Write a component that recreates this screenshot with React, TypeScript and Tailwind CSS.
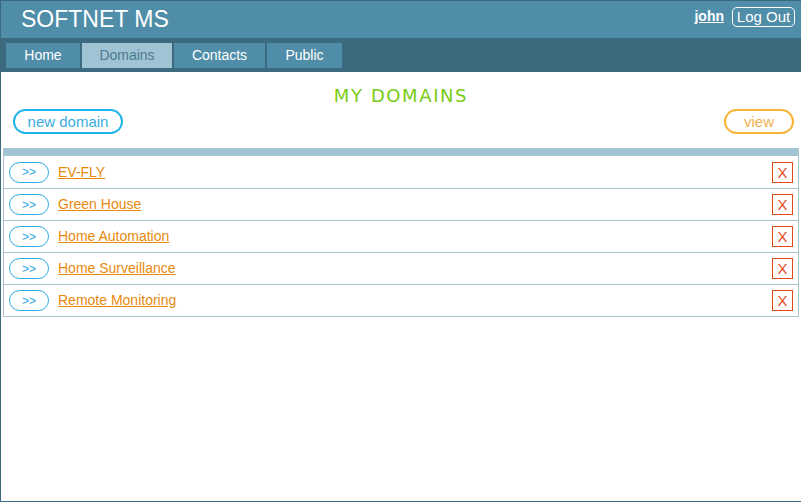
import React from 'react';

const domains = ['EV-FLY', 'Green House', 'Home Automation', 'Home Surveillance', 'Remote Monitoring'];

const tabs = [
  { label: 'Home', w: 'w-[74px]' },
  { label: 'Domains', w: 'w-[90px]', active: true },
  { label: 'Contacts', w: 'w-[91px]' },
  { label: 'Public', w: 'w-[75px]' },
];

export default function App() {
  return (
    <div className="w-[801px] h-[502px] bg-white border-t border-l border-b border-[#3b6a7e] flex flex-col font-['Liberation_Sans',Arial,sans-serif] overflow-hidden">
      {/* Header */}
      <div className="h-[37px] bg-[#4f8da8] flex items-center justify-between pl-[20px] pr-[6px]">
        <span className="text-white text-[23px] leading-none">SOFTNET MS</span>
        <div className="flex items-center gap-[8px] -mt-[6px]">
          <a className="text-white text-[14px] font-bold underline">john</a>
          <button className="text-white text-[15px] leading-none border border-white rounded-[5px] w-[63px] h-[20px]">
            Log Out
          </button>
        </div>
      </div>

      {/* Nav */}
      <div className="h-[34px] bg-[#3c6b80] flex items-start gap-[2px] pl-[5px] pt-[5px]">
        {tabs.map(t => (
          <div
            key={t.label}
            className={`${t.w} h-[25px] flex items-center justify-center text-[14px] ${
              t.active ? 'bg-[#a1c4d4] text-[#4b7b8f]' : 'bg-[#4f8da8] text-white'
            }`}
          >
            {t.label}
          </div>
        ))}
      </div>

      {/* Content */}
      <div className="flex flex-col">
        <h1 className="text-center text-[#7acc12] text-[18px] leading-none tracking-[1.6px] font-['DejaVu_Sans',Verdana,sans-serif] mt-[15px]">
          MY DOMAINS
        </h1>
        <div className="flex items-center justify-between px-[12px] mt-[4px]">
          <button className="w-[110px] h-[25px] rounded-full border-2 border-[#1fb5ec] text-[#3aaee0] text-[15px] leading-none">
            new domain
          </button>
          <button className="w-[70px] h-[25px] rounded-full border-2 border-[#f6b334] text-[#f2b04a] text-[15px] leading-none mr-[-5px]">
            view
          </button>
        </div>

        <div className="mx-[2px] mt-[14px] w-[796px] border-l border-r border-b border-[#a8c3cb]">
          <div className="h-[8px] bg-[#a1c4d4]" />
          {domains.map((d, i) => (
            <div
              key={d}
              className={`h-[32px] flex items-center pl-[5px] pr-[5px] ${i > 0 ? 'border-t border-[#a8c3cb]' : ''}`}
            >
              <button className="w-[40px] h-[21px] rounded-full border border-[#2aaae6] text-[#2aaae6] text-[12px] leading-none">
                &gt;&gt;
              </button>
              <a className="ml-[9px] text-[#e8890c] text-[14px] underline">{d}</a>
              <div className="ml-auto w-[21px] h-[21px] border border-[#e2471a] text-[#e84a25] text-[15px] flex items-center justify-center leading-none">
                X
              </div>
            </div>
          ))}
        </div>
      </div>
    </div>
  );
}
